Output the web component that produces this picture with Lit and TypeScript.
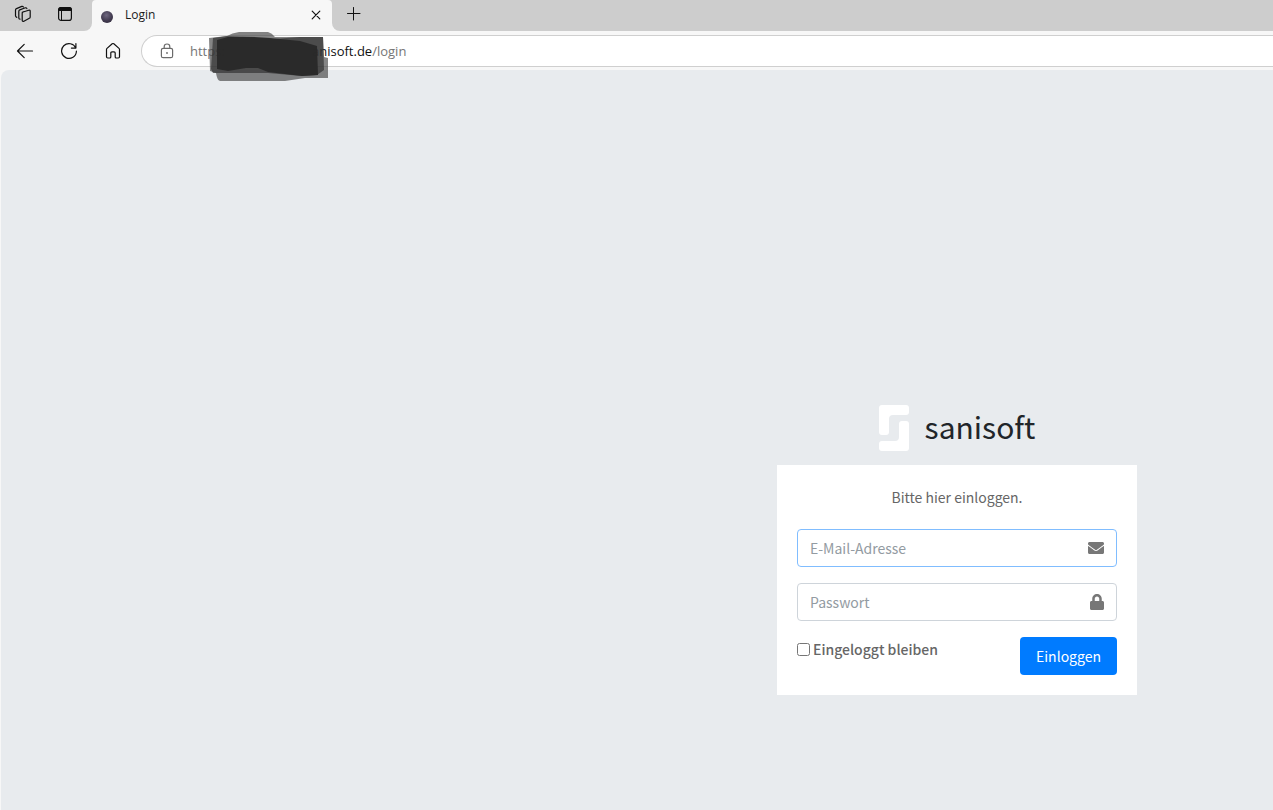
import { LitElement, html, css } from "lit";
import { customElement } from "lit/decorators.js";

@customElement("browser-chrome")
class BrowserChrome extends LitElement {
  static styles = css`
    :host { display: block; background: #f7f7f7; font-family: "Open Sans", "Noto Sans", sans-serif; }
    * { box-sizing: border-box; }
    button { border: 0; padding: 0; background: none; color: #111; display: grid; place-items: center; }
    svg { display: block; fill: none; stroke: currentColor; stroke-width: 1.2; stroke-linecap: round; stroke-linejoin: round; }
    .strip { display: flex; height: 31px; }
    .actions { display: flex; flex: none; width: 92px; padding: 0 16px 3px 12px; gap: 20px; background: #cdcdcd; border-bottom-right-radius: 8px; }
    .actions button { width: 22px; }
    .tabwrap { flex: none; width: 240px; background: linear-gradient(#cdcdcd 50%, #f7f7f7 50%); }
    .tab { display: flex; align-items: center; height: 31px; padding: 0 8px 2px 9px; background: #f7f7f7; border-radius: 4px 4px 0 0; }
    .ball { width: 12px; height: 12px; margin: 4px 12px 0 0; border-radius: 50%; background: radial-gradient(circle at 45% 35%, #6f6880, #423b50 55%, #2b2636); }
    .title { flex: 1; font-size: 12px; line-height: 16px; color: #1b1b1b; }
    .tab button { width: 16px; height: 16px; }
    .rest { flex: 1; padding: 0 0 3px 12px; display: flex; background: #cdcdcd; border-bottom-left-radius: 8px; }
    .rest button { width: 20px; }
    .bar { display: flex; height: 39px; padding-left: 13px; align-items: center; }
    .nav { display: flex; gap: 20px; flex: none; margin-right: 16px; }
    .nav button { width: 24px; height: 24px; }
    .address { position: relative; flex: 1; display: flex; align-items: center; height: 32px; padding-left: 17px; background: #fff; border: 1px solid #cfcfcf; border-right: 0; border-radius: 16px 0 0 16px; color: #767676; font-size: 13px; line-height: 20px; }
    .lock { color: #6b6b6b; margin-right: 15px; }
    .url { display: flex; }
    .scheme { width: 122px; }
    .host { color: #111; }
    .scribble { position: absolute; left: 66px; top: -5px; stroke: none; }
  `;

  render() {
    return html`
      <div class="strip">
        <div class="actions">
          <button aria-label="Workspaces">
            <svg width="18" height="18" viewBox="0 0 18 18"><path d="M8.2 7.2 14.8 5.2Q16.2 4.9 16.2 6.3V12Q16.2 13 15.3 13.3L9.9 16.2Q8.3 16.9 8.2 15.3V8.3Q8.2 7.2 9.2 6.9"/><path d="M6 14.2Q4.8 14.1 4.8 13V6.4Q4.8 5.3 5.8 4.9L11.3 2.8Q12.5 2.5 12.9 3.6"/><path d="M2.8 12.3Q1.5 12 1.5 10.8V5.1Q1.5 4 2.5 3.6L7.8 1.4Q8.9 1.1 9.4 2"/></svg>
          </button>
          <button aria-label="Tab actions">
            <svg width="16" height="16" viewBox="0 0 16 16"><rect x="1.6" y="1.6" width="12.8" height="12.8" rx="2.5"/><path d="M1.6 4.5V4Q1.6 1.6 4 1.6H12Q14.400 1.6 14.4 4V4.500Z" fill="currentColor"/><path d="M4.500 5V14" stroke-width="1"/></svg>
          </button>
        </div>
        <div class="tabwrap">
          <div class="tab">
            <span class="ball"></span><span class="title">Login</span>
            <button aria-label="Close tab"><svg width="10" height="10" viewBox="0 0 10 10"><path d="m1.200 1.200 7.600 7.600M8.800 1.200 1.200 8.800"/></svg></button>
          </div>
        </div>
        <div class="rest">
          <button aria-label="New tab"><svg width="14" height="14" viewBox="0 0 14 14"><path d="M6.500 .5V13M.5 6.500H13" stroke-width="1"/></svg></button>
        </div>
      </div>
      <div class="bar">
        <div class="nav">
          <button aria-label="Back"><svg width="18" height="16" viewBox="0 0 18 16"><path d="M16.5 8H1.5M8.2 1.3 1.5 8l6.7 6.7"/></svg></button>
          <button aria-label="Reload"><svg width="18" height="18" viewBox="0 0 18 18"><path d="M15.8 6.1A7.4 7.4 0 1 0 16.4 9.2M15.9 1.6V6.1H11.4"/></svg></button>
          <button aria-label="Home"><svg width="16" height="18" viewBox="0 0 16 18"><path d="M1.5 7.6Q1.5 6.9 2 6.4L7.2 1.8Q8 1.2 8.8 1.8L14 6.4Q14.5 6.9 14.5 7.6V14.8Q14.5 16 13.3 16H11.2Q10.2 16 10.2 15V11Q10.2 9.8 9 9.8H7Q5.8 9.8 5.8 11V15Q5.8 16 4.8 16H2.7Q1.5 16 1.5 14.8Z"/></svg></button>
        </div>
        <div class="address">
          <svg class="lock" width="16" height="16" viewBox="0 0 16 16"><rect x="2.4" y="5.3" width="11.2" height="9.4" rx="1.8"/><path d="M5.2 5V3.7Q5.2 1 8 1T10.8 3.7V5"/><circle cx="8" cy="10" r=".9" fill="currentColor" stroke="none"/></svg>
          <div class="url"><span class="scheme">https:</span><span class="host">anisoft.de</span><span>/login</span></div>
          <svg class="scribble" width="122" height="52" viewBox="0 0 122 52" aria-hidden="true">
            <path d="M1 7 19 5Q24 2 31 1H60Q64 2 67 6H115L116 26 120 27V47H97L77 50H12Q9 49 8 42L2 40Z" fill="#444" fill-opacity=".65"/>
            <path d="M5 7 19 5 65 8 92 6H115L116 39 109 44 94 45 60 42H5L3 38Z" fill="#333" fill-opacity=".7"/>
            <path d="M9 9 20 6Q42 5 62 7L92 10 109 15 110 44 94 45 60 41 50 37 38 37 20 40 9 38Z" fill="#292929" fill-opacity=".96"/>
          </svg>
        </div>
      </div>
    `;
  }
}

@customElement("login-form")
class LoginForm extends LitElement {
  static styles = css`
    :host { display: block; width: 360px; max-width: 100%; }
    * { box-sizing: border-box; }
    .brand { display: flex; align-items: flex-start; justify-content: center; gap: 16px; height: 46px; margin: 0 0 14px; color: #212529; font-size: 30px; line-height: 42px; font-weight: 400; }
    .card { padding: 20px; background: #fff; color: #666; }
    p { margin: 0 0 20px; text-align: center; line-height: 24px; }
    .field { display: flex; align-items: center; height: 38px; margin-bottom: 16px; padding: 0 12px; border: 1px solid #ced4da; border-radius: 4px; color: #777; }
    .field:first-of-type { border-color: #80bdff; }
    .field input { flex: 1; min-width: 0; height: 36px; padding: 0; border: 0; outline: 0; background: none; font: inherit; color: #495057; }
    .field input::placeholder { color: #939ba2; opacity: 1; }
    .field svg { display: block; fill: currentColor; }
    .row { display: flex; justify-content: space-between; align-items: flex-start; }
    .remember { display: flex; align-items: center; gap: 3px; height: 24px; font-weight: 500; }
    .remember input { width: 13px; height: 13px; margin: 0; }
    .submit { height: 38px; padding: 0 16px; border: 0; border-radius: 4px; background: #007bff; color: #fff; font: inherit; }
  `;

  render() {
    return html`
      <h1 class="brand">
        <svg width="30" height="46" viewBox="0 0 30 46" fill="#fff" aria-hidden="true"><path d="M3 0H27Q30 0 30 3V7Q30 10 27 10H14Q10 10 10 14V27Q10 30 7 30H3Q0 30 0 27V3Q0 0 3 0Z"/><path d="M27 46H3Q0 46 0 43V39Q0 36 3 36H16Q20 36 20 32V19Q20 16 23 16H27Q30 16 30 19V43Q30 46 27 46Z"/></svg>
        <span>sanisoft</span>
      </h1>
      <form class="card" @submit=${(e: Event) => e.preventDefault()}>
        <p>Bitte hier einloggen.</p>
        <div class="field">
          <input type="email" placeholder="E-Mail-Adresse" aria-label="E-Mail-Adresse">
          <svg width="16" height="12" viewBox="0 64 512 384"><path d="M502.3 190.8c3.900-3.100 9.700-.2 9.700 4.700V400c0 26.500-21.500 48-48 48H48c-26.500 0-48-21.500-48-48V195.600c0-5 5.700-7.800 9.700-4.700 22.400 17.400 52.100 39.500 154.100 113.600 21.100 15.400 56.700 47.800 92.200 47.600 35.700.3 72-32.800 92.300-47.600 102-74.100 131.600-96.300 154-113.700zM256 320c23.200.4 56.600-29.200 73.400-41.400 132.700-96.300 142.800-104.700 173.400-128.700 5.800-4.500 9.200-11.500 9.200-18.900v-19c0-26.500-21.500-48-48-48H48c-26.500 0-48 21.500-48 48v19c0 7.400 3.400 14.300 9.200 18.900 30.600 23.900 40.700 32.400 173.400 128.700 16.800 12.200 50.200 41.800 73.400 41.400z"/></svg>
        </div>
        <div class="field">
          <input type="password" placeholder="Passwort" aria-label="Passwort">
          <svg width="14" height="16" viewBox="0 0 448 512"><path d="M400 224h-24v-72C376 68.200 307.800 0 224 0S72 68.200 72 152v72H48c-26.500 0-48 21.500-48 48v192c0 26.500 21.500 48 48 48h352c26.500 0 48-21.500 48-48V272c0-26.500-21.500-48-48-48zm-104 0H152v-72c0-39.700 32.300-72 72-72s72 32.300 72 72v72z"/></svg>
        </div>
        <div class="row">
          <label class="remember"><input type="checkbox"><span>Eingeloggt bleiben</span></label>
          <button class="submit" type="submit">Einloggen</button>
        </div>
      </form>
    `;
  }
}

@customElement("app-root")
class AppRoot extends LitElement {
  static styles = css`
    :host { display: flex; flex-direction: column; min-height: 100vh; background: #f7f7f7; }
    main { flex: 1; display: flex; justify-content: flex-end; align-items: flex-end; margin-left: 1px; padding: 32px 136px 115px 32px; background: #e8ebee; border-top-left-radius: 8px; font: 400 14px/24px "Noto Sans CJK SC", "Noto Sans", sans-serif; }
  `;

  render() {
    return html`<browser-chrome></browser-chrome><main><login-form></login-form></main>`;
  }
}
